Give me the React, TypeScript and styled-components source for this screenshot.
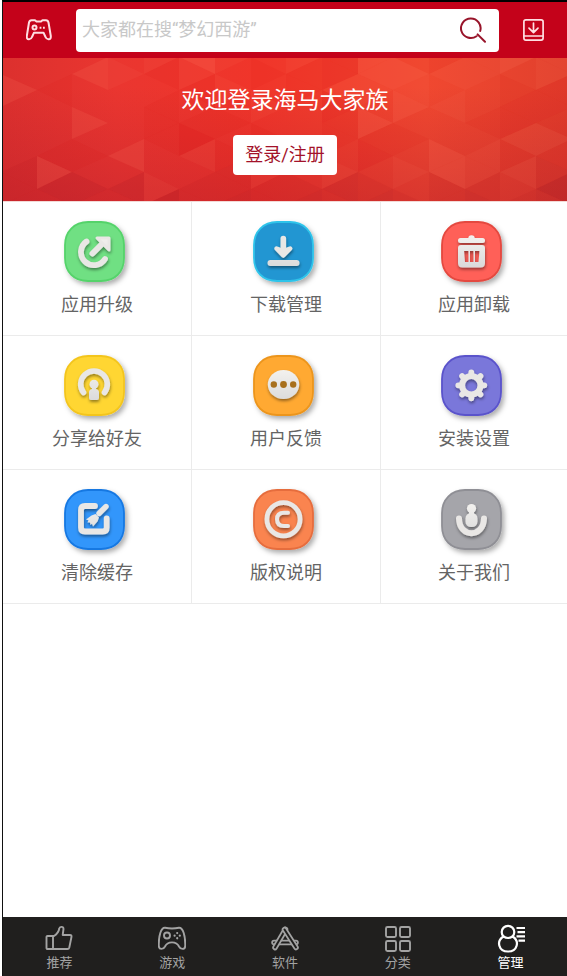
import React from "react";
import styled, { createGlobalStyle } from "styled-components";

const GlobalStyle = createGlobalStyle`
  * { box-sizing: border-box; }
  body {
    margin: 0;
    background: #fff;
    font-family: Roboto, "Noto Sans CJK SC", sans-serif;
  }
  button, input { font-family: inherit; }
`;

const Page = styled.div`
  display: flex;
  flex-direction: column;
  min-height: 100vh;
  margin-left: 2px;
  border-left: 1px solid #111;
  border-top: 2px solid #000;
`;

const Header = styled.header`
  display: flex;
  align-items: center;
  gap: 24px;
  height: 56px;
  padding: 0 23px;
  background: #c4021a;
`;

const IconButton = styled.button`
  display: flex;
  flex: none;
  padding: 0;
  border: 0;
  background: none;
  cursor: pointer;
`;

const SearchForm = styled.form`
  display: flex;
  flex: 1;
  align-items: center;
  min-width: 0;
  height: 43px;
  padding: 0 13px 0 6px;
  border-radius: 4px;
  background: #fff;
`;

const SearchInput = styled.input`
  flex: 1;
  min-width: 0;
  padding: 0;
  border: 0;
  outline: 0;
  background: none;
  color: #333;
  font-size: 18px;
  line-height: 26px;
  &::placeholder { color: #c8c8c8; opacity: 1; }
`;

const Banner = styled.section`
  position: relative;
  display: flex;
  flex-direction: column;
  align-items: center;
  gap: 18px;
  height: 143px;
  padding-top: 27px;
  overflow: hidden;
  background: #e2332e;
`;

const BannerArt = styled.svg`
  position: absolute;
  inset: 0;
  width: 100%;
  height: 100%;
`;

const Welcome = styled.h1`
  position: relative;
  margin: 0;
  color: #fff;
  font-size: 23px;
  font-weight: 400;
  line-height: 32px;
`;

const LoginButton = styled.button`
  position: relative;
  height: 40px;
  padding: 0 12px;
  border: 0;
  border-radius: 4px;
  background: #fff;
  color: #a3122a;
  font-size: 18px;
  line-height: 26px;
  cursor: pointer;
`;

const Grid = styled.main`
  display: grid;
  grid-template-columns: 189fr 189fr 186fr;
  border-top: 1px solid #f3d9d6;
`;

const Cell = styled.button`
  display: flex;
  flex-direction: column;
  align-items: center;
  gap: 5px;
  padding: 19px 0 17px;
  border: 0;
  border-right: 1px solid #ebebeb;
  border-bottom: 1px solid #ebebeb;
  background: #fff;
  color: #646464;
  font-size: 18px;
  line-height: 26px;
  cursor: pointer;
  &:nth-child(3n) { border-right: 0; }
`;

const Spacer = styled.div`
  flex: 1;
`;

const TabBar = styled.nav`
  display: grid;
  grid-template-columns: repeat(5, 1fr);
  height: 59px;
  background: #201f1e;
`;

const Tab = styled.a<{ $active?: boolean }>`
  display: flex;
  flex-direction: column;
  align-items: center;
  padding-top: 7px;
  color: ${(p) => (p.$active ? "#fff" : "#a3a3a3")};
  font-size: 13px;
  line-height: 18px;
  text-decoration: none;
`;

/* Banner mosaic: one string per column, one digit per triangle; 5 is neutral. */
const TONES = [
  "55575555444",
  "55545554734",
  "55755754534",
  "55655557534",
  "56454445562",
  "58645426544",
  "56565454443",
  "55456545644",
  "56445556543",
  "53363445634",
  "57765743543",
  "55767545654",
  "54656557744",
  "56655456643",
  "57543364654",
  "56633464413",
];

function facetPoints(c: number, n: number) {
  const x = (k: number) => Math.round((k * 107) / 3) - 2;
  const y = (k: number) => Math.round(k * 16.4) - 17;
  return (c + n) % 2 === 0
    ? `${x(c)},${y(n)} ${x(c + 1)},${y(n - 1)} ${x(c + 1)},${y(n + 1)}`
    : `${x(c + 1)},${y(n)} ${x(c)},${y(n - 1)} ${x(c)},${y(n + 1)}`;
}

function Mosaic() {
  return (
    <BannerArt viewBox="0 0 564 143" preserveAspectRatio="none" aria-hidden="true">
      <defs>
        <linearGradient id="warm" x1="0" x2="1">
          <stop offset="0" stopColor="#dc302e" />
          <stop offset=".2" stopColor="#ea3630" />
          <stop offset=".45" stopColor="#f0352a" />
          <stop offset=".75" stopColor="#f04830" />
          <stop offset="1" stopColor="#e1402d" />
        </linearGradient>
        <linearGradient id="depth" x1="0" x2="0" y1="0" y2="1">
          <stop offset=".2" stopColor="#b41c2c" stopOpacity="0" />
          <stop offset="1" stopColor="#b41c2c" stopOpacity=".38" />
        </linearGradient>
      </defs>
      <rect width="564" height="143" fill="url(#warm)" />
      <rect width="564" height="143" fill="url(#depth)" />
      {TONES.map((tones, c) =>
        tones.split("").map((digit, n) => {
          const tone = Number(digit) - 5;
          return (
            tone !== 0 && (
              <polygon
                key={`${c}-${n}`}
                points={facetPoints(c, n)}
                fill={tone > 0 ? "#ff8068" : n > 7 ? "#a01420" : "#d80c14"}
                fillOpacity={Math.abs(tone) * 0.075}
              />
            )
          );
        })
      )}
    </BannerArt>
  );
}

function GamepadIcon() {
  return (
    <svg width="26" height="22" viewBox="0 0 26 22" fill="none" stroke="#ffdfe2" strokeWidth="2" strokeLinejoin="round">
      <path d="M5.5 1.2H9L10.5 2.5H15L16.5 1.2H20Q22 1.2 22.5 3.5L24.8 17Q25 20.3 22.8 20.3Q20.5 20.5 19.5 18L17.5 13.7H8L6 18Q5 20.5 2.8 20.3Q.5 20.3 .8 17L3 3.5Q3.5 1.2 5.5 1.2Z" />
      <circle cx="8.5" cy="8.6" r="2" />
      <path d="M13.6 8.8h1.8M17 8.8h1.8" />
    </svg>
  );
}

function InboxIcon() {
  return (
    <svg width="21" height="22" viewBox="0 0 21 22" fill="none" stroke="#ffdfe2" strokeWidth="1.7" strokeLinecap="round" strokeLinejoin="round">
      <rect x=".9" y=".9" width="19.2" height="20.2" rx="2" />
      <path d="M1 17H20M10.5 4V13.4M6 9.2L10.5 13.6L15 9.2" />
    </svg>
  );
}

function SearchIcon() {
  return (
    <svg width="26" height="26" viewBox="0 0 26 26" fill="none" stroke="#98142a" strokeWidth="2" strokeLinecap="round">
      <path d="M16.5 19.2A9.8 9.8 0 1 1 20.2 14M17.6 17.4L25 24.8" />
    </svg>
  );
}

type TileProps = { fill: string; edge: string; children: React.ReactNode };

function Tile({ fill, edge, children }: TileProps) {
  return (
    <svg width="66" height="66" viewBox="0 0 66 66" overflow="visible" aria-hidden="true">
      <defs>
        <linearGradient id="metal" gradientUnits="userSpaceOnUse" x1="0" x2="0" y1="12" y2="48">
          <stop offset="0" stopColor="#f5f3f0" />
          <stop offset="1" stopColor="#d9d9d9" />
        </linearGradient>
        <filter id="tileShadow" x="-20%" y="-20%" width="150%" height="150%">
          <feDropShadow dx="2.5" dy="3" stdDeviation="2.6" floodColor="#000" floodOpacity=".32" />
        </filter>
        <filter id="glyphShadow" x="-30%" y="-30%" width="170%" height="180%">
          <feDropShadow dx=".5" dy="2" stdDeviation="1.8" floodColor="#000" floodOpacity=".42" />
        </filter>
      </defs>
      <path
        d="M24 1H37C51 1 60 11 60 24V37C60 51 51 60 37 60H24C10 60 1 51 1 37V24C1 11 10 1 24 1Z"
        fill={fill}
        stroke={edge}
        strokeWidth="1.8"
        filter="url(#tileShadow)"
      />
      <g filter="url(#glyphShadow)" fill="url(#metal)" strokeWidth="0" strokeLinecap="round" strokeLinejoin="round" stroke="#e9e7e5">
        {children}
      </g>
    </svg>
  );
}

const gearTeeth = Array.from({ length: 8 }, (_, i) => {
  const a = (i * Math.PI) / 4;
  const p = (r: number) => `${30.3 + r * Math.cos(a)} ${30.3 + r * Math.sin(a)}`;
  return `M${p(10)}L${p(13)}`;
}).join("");

const tools = [
  {
    label: "应用升级", fill: "#70e083", edge: "#55d36b",
    glyph: (
      <>
        <path d="M22.5 20.5A13 13 0 1 0 41 38" fill="none" strokeWidth="5.8" />
        <path d="M28.5 32.5L40 21" fill="none" strokeWidth="6" />
        <path d="M33 17H45V29Z" strokeWidth="3" />
      </>
    ),
  },
  {
    label: "下载管理", fill: "#2496d2", edge: "#2fc4ea",
    glyph: (
      <>
        <path d="M30.3 17.5V31" fill="none" strokeWidth="5.6" />
        <path d="M23.5 27.5L30.3 34.5L37.2 27.5L30.3 30Z" strokeWidth="4.5" />
        <rect x="14.5" y="39" width="32" height="6" rx="3" />
      </>
    ),
  },
  {
    label: "应用卸载", fill: "#ff6158", edge: "#e4483f",
    glyph: (
      <>
        <circle cx="30.5" cy="17.5" r="3.2" />
        <rect x="17" y="17" width="27" height="5" rx="2.5" />
        <path fillRule="evenodd" d="M20 24H41Q44 24 44 27V42Q44 46.500 39.5 46.5H21.5Q17 46.5 17 42V27Q17 24 20 24ZM23 30L24 41H27.5V30ZM29 30V41H32.5V30ZM34 30V41H37.5L38.5 30Z" />
      </>
    ),
  },
  {
    label: "分享给好友", fill: "#ffd632", edge: "#f3c51f",
    glyph: (
      <>
        <path d="M19.5 37.5A13.3 13.3 0 1 1 40.5 37.5" fill="none" strokeWidth="5.6" />
        <circle cx="30" cy="29.3" r="4.5" />
        <path d="M28 32H32V34Q35 34.5 35 37.5V43Q35 45 33 45H27Q25 45 25 43V37.5Q25 34.5 28 34Z" />
      </>
    ),
  },
  {
    label: "用户反馈", fill: "#ffa932", edge: "#ec951d",
    glyph: (
      <>
        <ellipse cx="30.5" cy="29.5" rx="15.7" ry="14.6" />
        <g fill="#a8701e">
          <circle cx="20.8" cy="29.5" r="3.2" />
          <circle cx="30.5" cy="29.5" r="3.4" />
          <circle cx="40.2" cy="29.5" r="3.2" />
        </g>
      </>
    ),
  },
  {
    label: "安装设置", fill: "#7a77da", edge: "#5a53cb",
    glyph: (
      <>
        <path d={gearTeeth} fill="none" strokeWidth="5.8" />
        <circle cx="30.3" cy="30.3" r="9.2" fill="none" strokeWidth="6" />
      </>
    ),
  },
  {
    label: "清除缓存", fill: "#3396fb", edge: "#1678e2",
    glyph: (
      <>
        <path d="M31 17H21Q17 17 17 21V38.5Q17 42.5 21 42.5H38.7Q42.7 42.5 42.7 38.5V29.5" fill="none" strokeWidth="5.8" />
        <path d="M42 17.5L35 24.5" fill="none" strokeWidth="5.4" />
        <path d="M31.5 25L35 28.5L33.5 32.5L29 37.5L28 34.8L26.5 36L26 33.5L23.5 33.5L24.5 31.2L22 30.5L27.5 26.5Z" />
      </>
    ),
  },
  {
    label: "版权说明", fill: "#fa8450", edge: "#e66d3e",
    glyph: (
      <>
        <circle cx="30.5" cy="30.3" r="16.6" fill="none" strokeWidth="4.8" />
        <path d="M35 23.8H31Q24 23.8 24 30.3Q24 37 31 37H35" fill="none" strokeWidth="4" />
      </>
    ),
  },
  {
    label: "关于我们", fill: "#a5a5aa", edge: "#8f8f95",
    glyph: (
      <>
        <path d="M18 29.5C18.3 49 42.6 49 43 29.5" fill="none" strokeWidth="6" />
        <circle cx="30.5" cy="19.5" r="4.6" />
        <rect x="28" y="22" width="5" height="4" />
        <rect x="24.5" y="24" width="12" height="14" rx="5.5" />
      </>
    ),
  },
];

const barLine = (d: string) => (
  <>
    <path d={d} stroke="currentColor" strokeWidth="5.5" />
    <path d={d} stroke="#201f1e" strokeWidth="2" />
  </>
);

const tabs = [
  {
    label: "推荐",
    icon: (
      <path d="M1.5 13a1 1 0 0 1 1-1H9C12 10 13.7 8 14.3 4.500C14.6 2.2 18.5 2.2 18.5 5L17.7 11H25q1.8 0 1.5 1.8L24.3 23.5q-.4 1.5-1.8 1.5H2.5a1 1 0 0 1-1-1ZM8 12.3V25" />
    ),
  },
  {
    label: "游戏",
    icon: (
      <>
        <path d="M7 3.8Q14 5.2 21 3.8C25 3.5 27.5 12 27.2 22C27 26 22.5 25.5 21 22.5C18.5 17 9.5 17 7 22.5C5.5 25.5 1 26 .8 22C.5 12 3 3.5 7 3.8Z" />
        <circle cx="9" cy="11.5" r="3" />
        <path d="M19.2 9v.1M16.6 11.6v.1M21.8 11.6v.1M19.2 14.2v.1" strokeWidth="2.2" />
      </>
    ),
  },
  {
    label: "软件",
    icon: (
      <>
        {barLine("M3 18.5H25")}
        {barLine("M14.5 5.5L4 23.5")}
        {barLine("M13.5 5.5L25 23.5")}
      </>
    ),
  },
  {
    label: "分类",
    icon: (
      <>
        <rect x="2" y="3" width="10" height="10" rx="1.5" />
        <rect x="16" y="3" width="10" height="10" rx="1.5" />
        <rect x="2" y="17" width="10" height="10" rx="1.5" />
        <rect x="16" y="17" width="10" height="10" rx="1.5" />
      </>
    ),
  },
  {
    label: "管理",
    active: true,
    icon: (
      <g strokeWidth="2.2">
        <path d="M6.5 12.5A6.3 6.3 0 1 1 15.5 12.5C23 17 20.5 27.5 11 27.5C1.5 27.5-1 17 6.5 12.5Z" />
        <path d="M6.5 12.5Q11 15.5 15.5 12.5" />
        <path d="M19.5 4H28M20.5 8.2H28M19.5 12.4H28M21.5 16.6H28" strokeLinecap="butt" />
      </g>
    ),
  },
];

export default function App() {
  return (
    <>
      <GlobalStyle />
      <Page>
        <Header>
          <IconButton type="button" aria-label="游戏"><GamepadIcon /></IconButton>
          <SearchForm role="search" onSubmit={(e) => e.preventDefault()}>
            <SearchInput type="text" aria-label="搜索" placeholder="大家都在搜“梦幻西游”" />
            <IconButton type="submit" aria-label="搜索"><SearchIcon /></IconButton>
          </SearchForm>
          <IconButton type="button" aria-label="下载"><InboxIcon /></IconButton>
        </Header>
        <Banner>
          <Mosaic />
          <Welcome>欢迎登录海马大家族</Welcome>
          <LoginButton type="button">登录/注册</LoginButton>
        </Banner>
        <Grid>
          {tools.map((t) => (
            <Cell type="button" key={t.label}>
              <Tile fill={t.fill} edge={t.edge}>{t.glyph}</Tile>
              {t.label}
            </Cell>
          ))}
        </Grid>
        <Spacer />
        <TabBar>
          {tabs.map((t) => (
            <Tab key={t.label} href="#" $active={t.active} aria-current={t.active ? "page" : undefined}>
              <svg width="28" height="30" viewBox="0 0 28 30" fill="none" stroke="currentColor" strokeWidth="1.9" strokeLinecap="round" strokeLinejoin="round" aria-hidden="true">
                {t.icon}
              </svg>
              {t.label}
            </Tab>
          ))}
        </TabBar>
      </Page>
    </>
  );
}
